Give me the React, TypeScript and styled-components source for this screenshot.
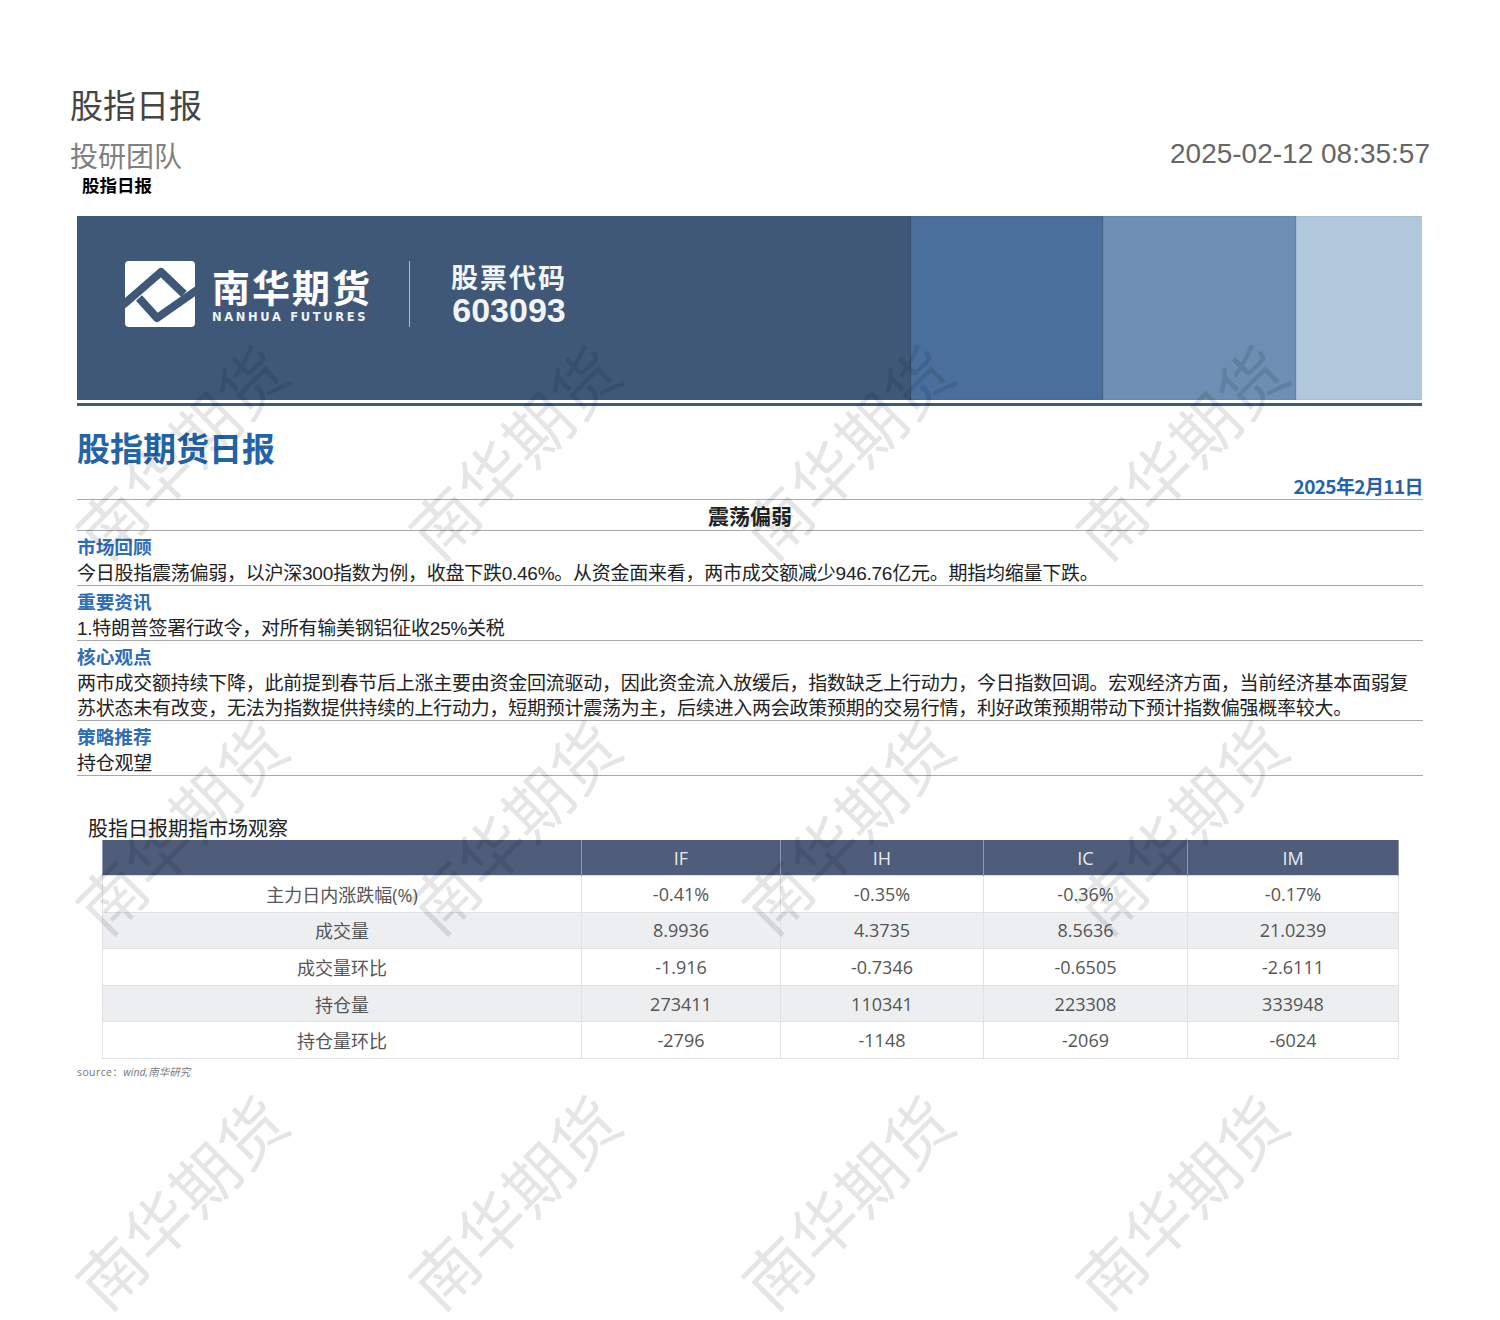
import React from "react"
import styled, { createGlobalStyle } from "styled-components"

const CJK = `"Noto Sans CJK SC", "Noto Sans", sans-serif`
const ARIAL_CJK = `"Liberation Sans", "Noto Sans CJK SC", sans-serif`
const OPEN_CJK = `"Open Sans", "Noto Sans CJK SC", sans-serif`

const sections = [
  {
    title: "市场回顾",
    lines: ["今日股指震荡偏弱，以沪深300指数为例，收盘下跌0.46%。从资金面来看，两市成交额减少946.76亿元。期指均缩量下跌。"],
  },
  { title: "重要资讯", lines: ["1.特朗普签署行政令，对所有输美钢铝征收25%关税"] },
  {
    title: "核心观点",
    lines: [
      "两市成交额持续下降，此前提到春节后上涨主要由资金回流驱动，因此资金流入放缓后，指数缺乏上行动力，今日指数回调。宏观经济方面，当前经济基本面弱复",
      "苏状态未有改变，无法为指数提供持续的上行动力，短期预计震荡为主，后续进入两会政策预期的交易行情，利好政策预期带动下预计指数偏强概率较大。",
    ],
  },
  { title: "策略推荐", lines: ["持仓观望"] },
]

const columns = ["IF", "IH", "IC", "IM"]

const rows = [
  ["主力日内涨跌幅(%)", "-0.41%", "-0.35%", "-0.36%", "-0.17%"],
  ["成交量", "8.9936", "4.3735", "8.5636", "21.0239"],
  ["成交量环比", "-1.916", "-0.7346", "-0.6505", "-2.6111"],
  ["持仓量", "273411", "110341", "223308", "333948"],
  ["持仓量环比", "-2796", "-1148", "-2069", "-6024"],
]

const bannerBlocks = [
  { width: 192, color: "#4a6f9c" },
  { width: 193, color: "#6d8fb3" },
  { width: 127, color: "#b0c7dc" },
]

const LogoMark = () => (
  <svg width="70" height="66" viewBox="0 0 70 66" aria-hidden="true">
    <rect width="70" height="66" rx="4" fill="#ffffff" />
    <path
      d="M-2 44 L36 11 L59 33"
      fill="none"
      stroke="#3f5878"
      strokeWidth="8"
      strokeLinejoin="round"
    />
    <path
      d="M72 29 L32 57 L14 37"
      fill="none"
      stroke="#3f5878"
      strokeWidth="8"
      strokeLinejoin="round"
    />
  </svg>
)

export default function App() {
  return (
    <Page>
      <GlobalStyle />
      <TitleBar>
        <div>
          <ReportTitle>股指日报</ReportTitle>
          <TeamRow>投研团队</TeamRow>
        </div>
        <Timestamp>2025-02-12 08:35:57</Timestamp>
      </TitleBar>
      <DocTag>股指日报</DocTag>

      <Document>
        <Banner>
          <BannerMain>
            <LogoMark />
            <Wordmark>
              <WordmarkCn>南华期货</WordmarkCn>
              <WordmarkEn>NANHUA FUTURES</WordmarkEn>
            </Wordmark>
            <BannerDivider />
            <StockCode>
              <StockLabel>股票代码</StockLabel>
              <StockNumber>603093</StockNumber>
            </StockCode>
          </BannerMain>
          {bannerBlocks.map((block) => (
            <BannerBlock key={block.color} $width={block.width} $color={block.color} />
          ))}
        </Banner>
        <BannerRule />

        <Headline>股指期货日报</Headline>
        <ReportDate>2025年2月11日</ReportDate>
        <Summary>震荡偏弱</Summary>

        {sections.map((section) => (
          <Section key={section.title}>
            <SectionTitle>{section.title}</SectionTitle>
            {section.lines.map((line) => (
              <BodyLine key={line}>{line}</BodyLine>
            ))}
          </Section>
        ))}

        <TableCaption>股指日报期指市场观察</TableCaption>
        <MarketTable>
          <colgroup>
            <col style={{ width: 479 }} />
            <col style={{ width: 199 }} />
            <col style={{ width: 203 }} />
            <col style={{ width: 204 }} />
            <col style={{ width: 211 }} />
          </colgroup>
          <thead>
            <tr>
              <HeadCell />
              {columns.map((name) => (
                <HeadCell key={name}>{name}</HeadCell>
              ))}
            </tr>
          </thead>
          <tbody>
            {rows.map((row) => (
              <BodyRow key={row[0]}>
                {row.map((value, i) => (
                  <BodyCell key={i}>{value}</BodyCell>
                ))}
              </BodyRow>
            ))}
          </tbody>
        </MarketTable>
        <Source>
          source：<em>wind,南华研究</em>
        </Source>
      </Document>

      <WatermarkLayer aria-hidden="true">
        {Array.from({ length: 12 }).map((_, i) => (
          <Watermark key={i}>
            <span>南华期货</span>
          </Watermark>
        ))}
      </WatermarkLayer>
    </Page>
  )
}

const GlobalStyle = createGlobalStyle`
  html, body {
    margin: 0;
    padding: 0;
    background: #ffffff;
  }
`

const Page = styled.div`
  position: relative;
  width: 1500px;
  height: 1320px;
  overflow: hidden;
  box-sizing: border-box;
  padding: 80px 70px 0;
  font-family: ${CJK};
`

const TitleBar = styled.div`
  display: flex;
  justify-content: space-between;
  align-items: flex-end;
`

const ReportTitle = styled.div`
  font-size: 33px;
  line-height: 48px;
  color: #444444;
`

const TeamRow = styled.div`
  font-size: 28px;
  line-height: 42px;
  margin-top: 6px;
  color: #808080;
`

const Timestamp = styled.div`
  font-family: "Liberation Sans", Arial, sans-serif;
  font-size: 28px;
  line-height: 34px;
  margin-bottom: 5px;
  color: #666666;
`

const DocTag = styled.div`
  margin: -3px 0 0 12px;
  font-size: 17.5px;
  line-height: 24px;
  font-weight: 700;
  color: #000000;
`

const Document = styled.div`
  width: 1346px;
  margin: 19px 0 0 7px;
`

const Banner = styled.div`
  display: flex;
  height: 184px;
  margin-right: 1px;
`

const BannerMain = styled.div`
  flex: 1;
  display: flex;
  align-items: flex-start;
  padding: 45px 0 0 48px;
  background: #3f5878;
`

const BannerBlock = styled.div<{ $width: number; $color: string }>`
  width: ${(p) => p.$width}px;
  background: ${(p) => p.$color};
  box-shadow: inset 1px 0 1px rgba(25, 45, 70, 0.5);
`

const Wordmark = styled.div`
  width: 157px;
  margin-left: 17px;
  color: #ffffff;
`

const WordmarkCn = styled.div`
  margin-top: 3px;
  font-size: 38px;
  line-height: 44px;
  font-weight: 700;
  letter-spacing: 2px;
  white-space: nowrap;
`

const WordmarkEn = styled.div`
  font-family: "DejaVu Sans", sans-serif;
  font-size: 11.5px;
  line-height: 18px;
  font-weight: 700;
  letter-spacing: 2.65px;
  white-space: nowrap;
  color: #eef2f6;
`

const BannerDivider = styled.div`
  width: 1px;
  height: 66px;
  margin-left: 40px;
  background: #a9bbd0;
`

const StockCode = styled.div`
  margin: 1px 0 0 41px;
  color: #f2f5f8;
`

const StockLabel = styled.div`
  font-size: 27px;
  line-height: 30px;
  font-weight: 700;
  letter-spacing: 2px;
  white-space: nowrap;
`

const StockNumber = styled.div`
  font-family: "Liberation Sans", Arial, sans-serif;
  font-size: 34px;
  line-height: 36px;
  font-weight: 700;
  text-align: center;
`

const BannerRule = styled.div`
  height: 3px;
  margin: 3px 1px 0 0;
  background: #3e5a7c;
`

const Headline = styled.div`
  margin-top: 15px;
  font-size: 33px;
  line-height: 52px;
  font-weight: 700;
  color: #2563a8;
`

const ReportDate = styled.div`
  margin-top: 2px;
  padding-bottom: 2px;
  font-size: 19px;
  line-height: 22px;
  font-weight: 700;
  letter-spacing: -0.6px;
  text-align: right;
  color: #2563a8;
`

const Summary = styled.div`
  border-top: 1px solid #a8a8a8;
  border-bottom: 1px solid #a8a8a8;
  font-size: 21px;
  line-height: 30px;
  font-weight: 700;
  text-align: center;
  color: #222222;
`

const Section = styled.div`
  border-bottom: 1px solid #a8a8a8;
`

const SectionTitle = styled.div`
  font-size: 18.7px;
  line-height: 29px;
  font-weight: 700;
  color: #2f6db5;
`

const BodyLine = styled.div`
  padding-top: 3px;
  font-family: ${ARIAL_CJK};
  font-size: 19px;
  line-height: 22px;
  letter-spacing: -0.25px;
  white-space: nowrap;
  color: #222222;
`

const TableCaption = styled.div`
  margin: 40px 0 0 11px;
  font-size: 20px;
  line-height: 24px;
  color: #222222;
`

const MarketTable = styled.table`
  width: 1296px;
  margin: 0 0 0 25px;
  table-layout: fixed;
  border-collapse: collapse;
  font-family: ${OPEN_CJK};
  font-size: 18px;
  color: #555555;
`

const HeadCell = styled.th`
  height: 35px;
  padding: 0;
  font-weight: 400;
  background: #4f5d7a;
  color: #e8ebf0;
  border-left: 1px solid #8e9ab0;
  border-right: 1px solid #8e9ab0;
`

const BodyRow = styled.tr`
  &:nth-child(even) {
    background: #edeef0;
  }
`

const BodyCell = styled.td`
  height: 35.6px;
  padding: 0;
  text-align: center;
  border: 1px solid #e0e1e4;
`

const Source = styled.div`
  margin-top: 4px;
  font-family: ${OPEN_CJK};
  font-size: 10.5px;
  line-height: 18px;
  letter-spacing: 0.4px;
  color: #777777;

  em {
    font-style: italic;
    letter-spacing: 0;
  }
`

const WatermarkLayer = styled.div`
  position: absolute;
  top: 0;
  left: 0;
  display: grid;
  grid-template-columns: repeat(4, 333.33px);
  grid-auto-rows: 120px;
  row-gap: 255px;
  padding: 390px 0 0 12px;
  pointer-events: none;
`

const Watermark = styled.div`
  display: flex;
  align-items: center;
  justify-content: center;

  span {
    transform: rotate(-45deg);
    font-size: 66px;
    line-height: 1;
    white-space: nowrap;
    color: rgba(0, 0, 0, 0.1);
  }
`
